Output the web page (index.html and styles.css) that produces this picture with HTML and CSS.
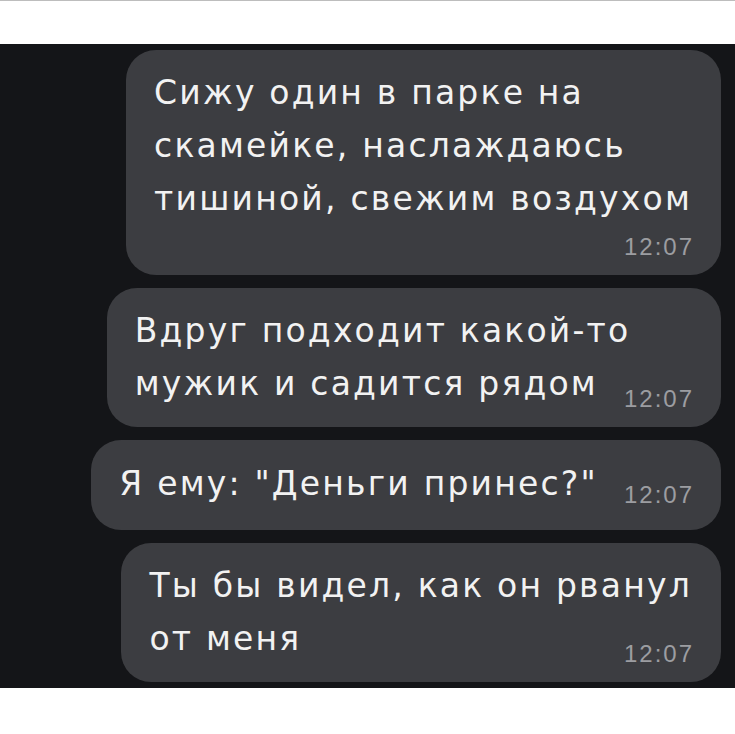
FILE: index.html
```html
<!DOCTYPE html>
<html lang="ru">
<head>
    <meta charset="UTF-8">
    <meta name="viewport" content="width=device-width, initial-scale=1.0">
    <title>Переписка</title>
    <link rel="stylesheet" href="styles.css">
</head>
<body>
    <div class="top"></div>

    <div class="chat">
        <div class="bubble">
            <p class="text">Сижу один в парке на<br>скамейке, наслаждаюсь<br>тишиной, свежим воздухом</p>
            <span class="time own-line">12:07</span>
        </div>

        <div class="bubble">
            <p class="text">Вдруг подходит какой-то<br>мужик и садится рядом<span class="time">12:07</span></p>
        </div>

        <div class="bubble single">
            <p class="text">Я ему: "Деньги принес?"<span class="time">12:07</span></p>
        </div>

        <div class="bubble">
            <p class="text">Ты бы видел, как он рванул<br>от меня<span class="time">12:07</span></p>
        </div>
    </div>

    <div class="bottom"></div>
</body>
</html>
```

FILE: styles.css
```css
body {
    margin: 0;
    background: #ffffff;
    font-family: "Liberation Sans", Arial, sans-serif;
}
.top {
    height: 43px;
    border-top: 1px solid #bdbdbd;
}
.chat {
    background-color: #141518;
    height: 644px;
    box-sizing: border-box;
    padding: 6px 14px 0 0;
    display: flex;
    flex-direction: column;
    align-items: flex-end;
    gap: 13px;
}
.bubble {
    background-color: #3c3d41;
    border-radius: 30px;
    padding: 16px 29px 15px 28px;
    display: flex;
    flex-direction: column;
}
.bubble.single {
    padding-top: 17px;
    padding-bottom: 20px;
}
.text {
    margin: 0;
    color: #f2f2f2;
    font-family: "DejaVu Sans", sans-serif;
    font-size: 33px;
    line-height: 53px;
    letter-spacing: 2.2px;
    display: flow-root;
}
.time {
    float: right;
    margin: 29px -2px 0 26px;
    color: #9c9da1;
    font-family: "Liberation Sans", Arial, sans-serif;
    font-size: 24px;
    line-height: 26px;
    letter-spacing: 2px;
}
.single .time {
    margin-top: 25px;
}
.time.own-line {
    float: none;
    display: block;
    text-align: right;
    margin: 9px -2px 0 0;
}
```
